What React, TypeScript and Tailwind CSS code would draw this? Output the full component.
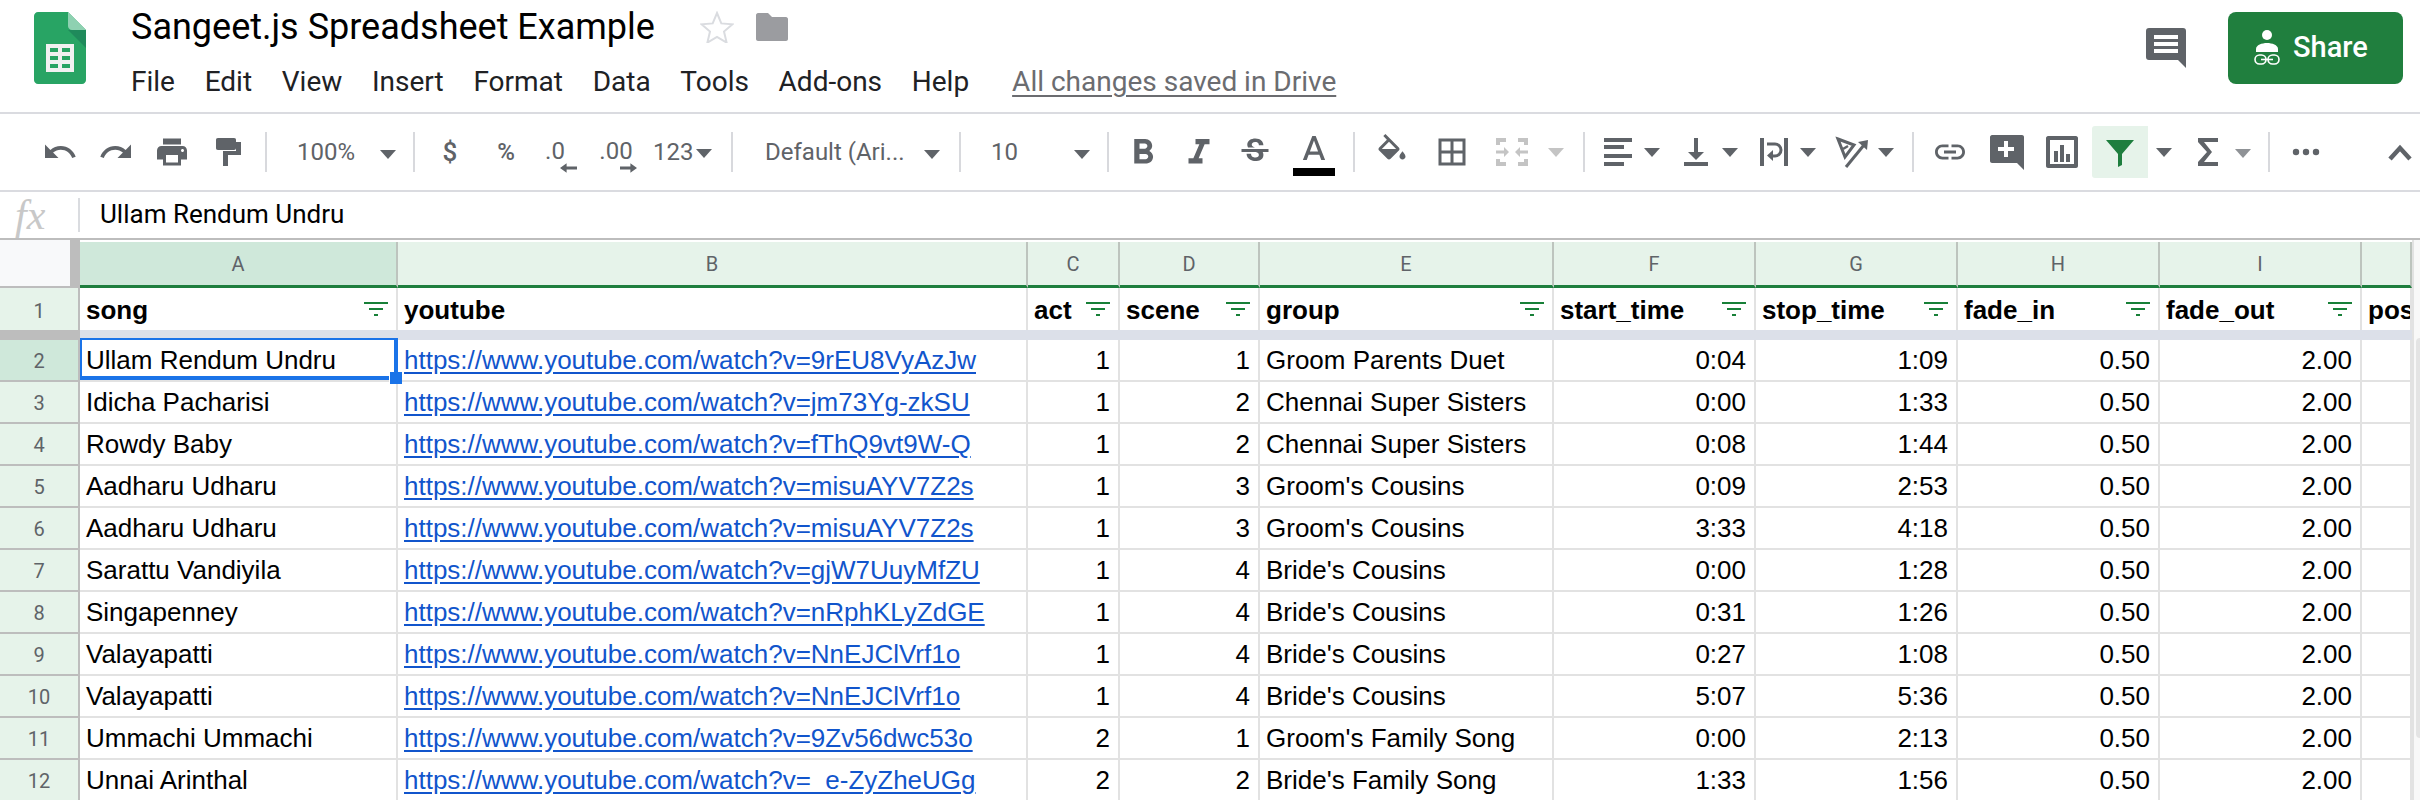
import React from "react";

const GREY = "#5f6368";
const COLS =
  "grid grid-cols-[80px_318px_630px_92px_140px_294px_202px_202px_202px_202px_50px]";

function Sep({ className = "" }: { className?: string }) {
  return <div className={"h-[40px] w-[2px] shrink-0 bg-[#d8d9dd] " + className} />;
}

function Caret({ className = "", color = GREY }: { className?: string; color?: string }) {
  return (
    <svg viewBox="0 0 16 9" className={"h-[9px] w-[16px] shrink-0 " + className}>
      <path d="M0 0h16L8 9z" fill={color} />
    </svg>
  );
}

function Ico({ d, children, vb = 24, color = GREY, className = "" }: { d?: string; children?: React.ReactNode; vb?: number; color?: string; className?: string }) {
  return (
    <svg viewBox={`0 0 ${vb} ${vb}`} fill={color} className={"h-[36px] w-[36px] shrink-0 " + className}>
      {d ? <path d={d} /> : null}
      {children}
    </svg>
  );
}

function Btn({ children, className = "" }: { children: React.ReactNode; className?: string }) {
  return <div className={"flex h-full w-[56px] shrink-0 items-center justify-center " + className}>{children}</div>;
}

function Drop({ label, className }: { label: string; className: string }) {
  return (
    <div className={"flex shrink-0 items-center text-[24px] text-[#5f6368] " + className}>
      <span className="whitespace-nowrap">{label}</span>
      <Caret className="ml-auto mt-[4px]" />
    </div>
  );
}

function IcoCaret({ children }: { children: React.ReactNode }) {
  return (
    <div className="flex w-[78px] shrink-0 items-center">
      {children}
      <Caret className="ml-[8px]" />
    </div>
  );
}

function Toolbar() {
  return (
    <div className="flex h-[80px] items-center border-y-2 border-[#dadbe0] pl-[32px] pr-[2px] font-['Roboto',sans-serif]">
      <Btn><Ico d="M12.5 8c-2.65 0-5.05.99-6.9 2.6L2 7v9h9l-3.62-3.62c1.39-1.16 3.16-1.88 5.12-1.88 3.54 0 6.55 2.31 7.6 5.5l2.37-.78C21.08 11.03 17.15 8 12.5 8z" /></Btn>
      <Btn><Ico d="M18.4 10.6C16.55 8.99 14.15 8 11.5 8c-4.65 0-8.58 3.03-9.96 7.22L3.9 16c1.05-3.19 4.05-5.5 7.6-5.5 1.95 0 3.73.72 5.12 1.88L13 16h9V7l-3.6 3.6z" /></Btn>
      <Btn><Ico d="M19 8H5c-1.66 0-3 1.34-3 3v6h4v4h12v-4h4v-6c0-1.66-1.34-3-3-3zm-3 11H8v-5h8v5zm3-7c-.55 0-1-.45-1-1s.45-1 1-1 1 .45 1 1-.45 1-1 1zm-1-9H6v4h12V3z" /></Btn>
      <Btn>
        <Ico vb={36}>
          <path d="M8 4h16c1.500 0 2 .7 2 2v8c0 1.300-.5 2-2 2H8c-1.500 0-2-.7-2-2V6c0-1.300.5-2 2-2z" />
          <path d="M26 8h5v13H18v11h-5V17h13z" />
        </Ico>
      </Btn>
      <Sep className="ml-[9px]" />
      <Drop label="100%" className="w-[146px] pl-[30px] pr-[17px]" />
      <Sep />
      <Btn className="ml-[7px] text-[26px] font-medium text-[#5f6368]">$</Btn>
      <Btn className="text-[24px] font-medium text-[#5f6368]">%</Btn>
      <div className="relative flex w-[56px] shrink-0 flex-col items-center">
        <span className="-mt-[2px] mr-[14px] text-[24px] leading-[28px] text-[#5f6368]">.0</span>
        <svg viewBox="0 0 18 10" className="absolute left-[26px] top-[24px] h-[10px] w-[17px]">
          <path d="M0 5l7-5v3.500h11v3H7V10z" fill={GREY} />
        </svg>
      </div>
      <div className="relative flex w-[56px] shrink-0 flex-col items-center">
        <span className="-mt-[2px] mr-[4px] text-[24px] leading-[28px] text-[#5f6368]">.00</span>
        <svg viewBox="0 0 18 10" className="absolute left-[30px] top-[24px] h-[10px] w-[17px]">
          <path d="M18 5l-7-5v3.500H0v3h11V10z" fill={GREY} />
        </svg>
      </div>
      <div className="flex w-[85px] shrink-0 items-center pl-[7px] text-[24px] text-[#5f6368]">
        <span>123</span>
        <Caret className="ml-[3px] mt-[2px]" />
      </div>
      <Sep />
      <Drop label="Default (Ari..." className="w-[226px] pl-[32px] pr-[19px]" />
      <Sep />
      <Drop label="10" className="w-[146px] pl-[30px] pr-[17px]" />
      <Sep />
      <Btn className="ml-[6px]">
        <svg viewBox="0 0 24 24" fill={GREY} className="mt-[2px] h-[42px] w-[42px]">
          <path d="M15.6 10.79c.97-.67 1.65-1.770 1.650-2.790 0-2.260-1.750-4-4-4H7v14h7.040c2.090 0 3.710-1.700 3.710-3.790 0-1.520-.860-2.820-2.150-3.420zM10 6.500h3c.830 0 1.500.670 1.500 1.500s-.670 1.500-1.500 1.500h-3v-3zm3.500 9H10v-3h3.500c.830 0 1.500.670 1.500 1.500s-.670 1.500-1.500 1.500z" />
        </svg>
      </Btn>
      <Btn>
        <svg viewBox="0 0 24 24" fill={GREY} className="mt-[2px] h-[42px] w-[42px]">
          <path d="M10 4v3h2.210l-3.420 8H6v3h8v-3h-2.210l3.420-8H18V4z" />
        </svg>
      </Btn>
      <Btn><Ico d="M6.850 7.080C6.850 4.370 9.450 3 12.240 3c1.640 0 3 .490 3.900 1.280.770.650 1.460 1.730 1.460 3.240h-3.010c0-.310-.050-.590-.150-.850-.290-.860-1.200-1.280-2.250-1.280-1.860 0-2.340 1.020-2.340 1.700 0 .480.250.880.740 1.210.380.250.770.480 1.410.700H7.390c-.210-.340-.540-.890-.540-1.920zM21 12v-2H3v2h9.620c1.150.450 1.960.750 1.960 1.970 0 1-.810 1.670-2.280 1.670-1.540 0-2.930-.540-2.930-2.510H6.400c0 .550.080 1.130.240 1.580.810 2.290 3.290 3.300 5.670 3.300 2.270 0 5.300-.890 5.300-4.050 0-.300-.010-1.160-.480-1.940H21V12z" /></Btn>
      <div className="mt-[8px] flex w-[56px] shrink-0 flex-col items-center pl-[6px]">
        <svg viewBox="5 3 14 14" className="h-[24px] w-[24px]" fill={GREY}>
          <path d="M11 3L5.500 17h2.250l1.120-3h6.250l1.120 3h2.250L13 3h-2zm-1.380 9L12 5.670 14.380 12H9.620z" />
        </svg>
        <div className="mt-[8px] h-[8px] w-[42px] bg-black" />
      </div>
      <Sep className="ml-[14px]" />
      <Btn className="ml-[9px]"><Ico d="M16.560 8.940L7.620 0 6.210 1.410l2.380 2.380-5.150 5.150c-.590.590-.590 1.540 0 2.120l5.500 5.500c.290.290.680.440 1.060.440s.770-.150 1.060-.440l5.500-5.500c.590-.580.590-1.530 0-2.120zM5.210 10L10 5.210 14.790 10H5.210zM19 11.500s-2 2.170-2 3.500c0 1.100.900 2 2 2s2-.900 2-2c0-1.330-2-3.500-2-3.500z" /></Btn>
      <Btn className="ml-[4px]"><Ico d="M3 3v18h18V3H3zm8 16H5v-6h6v6zm0-8H5V5h6v6zm8 8h-6v-6h6v6zm0-8h-6V5h6v6z" /></Btn>
      <Btn className="ml-[4px]">
        <Ico vb={36} color="#c4c4c4">
          <path d="M2 4h10v4H6v3H2zM24 4h10v7h-4V8h-6zM2 25h4v3h6v4H2zM30 25h4v7H24v-4h6z" />
          <path d="M2 16.500h8V13l5 5-5 5v-3.500H2zM34 16.500h-8V13l-5 5 5 5v-3.500h8z" />
        </Ico>
      </Btn>
      <Caret className="ml-[8px]" color="#c4c4c4" />
      <Sep className="ml-[19px]" />
      <div className="ml-[15px] flex items-center">
        <IcoCaret>
          <Ico vb={36}><path d="M4 4h28v4H4zM4 11h20v4H4zM4 20h28v4H4zM4 28h20v4H4z" /></Ico>
        </IcoCaret>
        <IcoCaret>
          <Ico vb={36}><path d="M6 28h24v4H6zM16 4h4v14h6l-8 8-8-8h6z" /></Ico>
        </IcoCaret>
        <IcoCaret>
          <Ico vb={36}>
            <path d="M4 4h4v28H4zM28 4h4v28h-4z" />
            <path d="M11 10h8a6 6 0 0 1 0 12h-3" fill="none" stroke={GREY} strokeWidth="3" />
            <path d="M17 16v11l-6-5.500z" />
          </Ico>
        </IcoCaret>
        <IcoCaret>
          <Ico vb={36}>
            <path d="M4 5l16 6-9 12z" fill="none" stroke={GREY} strokeWidth="3" />
            <path d="M9 15l5-3" stroke={GREY} strokeWidth="2.500" />
            <path d="M12 33L30 11" stroke={GREY} strokeWidth="3" />
            <path d="M24 8l10-2-1 10z" />
          </Ico>
        </IcoCaret>
      </div>
      <Sep />
      <Btn className="ml-[8px]"><Ico d="M3.900 12c0-1.710 1.390-3.100 3.100-3.100h4V7H7c-2.760 0-5 2.240-5 5s2.240 5 5 5h4v-1.900H7c-1.710 0-3.100-1.390-3.100-3.100zM8 13h8v-2H8v2zm9-6h-4v1.900h4c1.710 0 3.100 1.390 3.100 3.100s-1.390 3.100-3.100 3.100h-4V17h4c2.760 0 5-2.240 5-5s-2.240-5-5-5z" /></Btn>
      <Btn>
        <Ico vb={36}>
          <path fillRule="evenodd" d="M4 1h30c1 0 2 .700 2 2v33l-7-7H4c-1 0-2-1-2-2V3c0-1 1-2 2-2zm12 6v6h-6v4h6v6h4v-6h6v-4h-6V7z" />
        </Ico>
      </Btn>
      <Btn>
        <Ico vb={36}>
          <path fillRule="evenodd" d="M4 2h28c1 0 2 1 2 2v28c0 1-1 2-2 2H4c-1 0-2-1-2-2V4c0-1 1-2 2-2zm2 4v24h24V6zM10 17h4v11h-4zM16 11h4v17h-4zM22 20h4v8h-4z" />
        </Ico>
      </Btn>
      <div className="ml-[2px] flex h-[52px] w-[56px] shrink-0 items-center justify-center rounded-l-[3px] bg-[#e6f3ea]">
        <Ico vb={36} color="#1e7e3e"><path d="M4 6h28L20 20v11l-4 2V20z" /></Ico>
      </div>
      <Caret className="ml-[8px]" />
      <Ico vb={36} className="ml-[18px]"><path d="M8 4h20v4H14l8 10-8 10h14v4H8v-4l9-10L8 8z" /></Ico>
      <Caret className="ml-[9px] mt-[3px] h-[8px]" color="#8f9296" />
      <Sep className="ml-[17px]" />
      <Ico vb={36} className="ml-[18px]">
        <circle cx="8" cy="18" r="3.200" />
        <circle cx="18" cy="18" r="3.200" />
        <circle cx="28" cy="18" r="3.200" />
      </Ico>
      <Ico vb={36} className="ml-auto">
        <path d="M8 25l10-11 10 11" fill="none" stroke={GREY} strokeWidth="4.500" />
      </Ico>
    </div>
  );
}

function SheetsLogo() {
  return (
    <svg viewBox="0 0 52 72" className="h-[72px] w-[52px] shrink-0">
      <path d="M4 0h30l18 18v50c0 2.200-1.800 4-4 4H4c-2.200 0-4-1.800-4-4V4c0-2.200 1.800-4 4-4z" fill="#28a464" />
      <path d="M34 18l18 18V18z" fill="#1f8a5b" />
      <path d="M34 0l18 18H38c-2.200 0-4-1.800-4-4z" fill="#8ed1b1" />
      <path fillRule="evenodd" d="M12 32h28v28H12zM16 36v4h8v-4zm12 0v4h8v-4zM16 44v4h8v-4zm12 0v4h8v-4zM16 52v4h8v-4zm12 0v4h8v-4z" fill="#f1f1f1" />
    </svg>
  );
}

function TitleBar() {
  const menu = ["File", "Edit", "View", "Insert", "Format", "Data", "Tools", "Add-ons", "Help"];
  return (
    <div className="flex h-[112px] font-['Roboto',sans-serif]">
      <div className="ml-[34px] mt-[12px]"><SheetsLogo /></div>
      <div className="ml-[45px] flex flex-col">
        <div className="mt-[5px] flex h-[44px] items-center">
          <span className="text-[36px] leading-[44px] text-black">Sangeet.js Spreadsheet Example</span>
          <svg viewBox="0 0 34 32" className="ml-[45px] h-[32px] w-[34px]">
            <path d="M17 2l4.300 10.400 11.200.900-8.500 7.300 2.600 11L17 25.800 7.400 31.600 10 20.600 1.500 13.300l11.200-.900z" fill="none" stroke="#dadce0" strokeWidth="2" />
          </svg>
          <svg viewBox="0 0 32 28" className="ml-[22px] h-[28px] w-[32px]">
            <path d="M2 0h10l4 4h14c1 0 2 1 2 2v20c0 1-1 2-2 2H2c-1 0-2-1-2-2V2c0-1 1-2 2-2z" fill="#9b9ca0" />
          </svg>
        </div>
        <div className="mt-[15px] flex items-center text-[28px] leading-[36px]">
          <div className="flex gap-[29.7px] text-[#202124]">
            {menu.map((m) => (
              <span key={m}>{m}</span>
            ))}
          </div>
          <span className="ml-[43px] text-[#6b6c70] underline underline-offset-[4px]">All changes saved in Drive</span>
        </div>
      </div>
      <div className="ml-auto mr-[17px] mt-[12px] flex items-start">
        <svg viewBox="0 0 40 40" className="mr-[42px] mt-[16px] h-[40px] w-[40px]">
          <path fillRule="evenodd" d="M3 0h34c2 0 3 1 3 3v37l-8-8H3c-2 0-3-1-3-3V3c0-2 1-3 3-3zm5 7v4h24V7zm0 7v4h24v-4zm0 7v4h24v-4z" fill={GREY} />
        </svg>
        <div className="flex h-[72px] w-[175px] items-center rounded-[8px] bg-[#207f3e] pl-[26px] text-[29px] font-medium text-white">
          <svg viewBox="0 0 26 36" className="mr-[13px] h-[36px] w-[26px]">
            <circle cx="13" cy="5" r="5" fill="#fff" />
            <path d="M2 22v-3c0-4 6-6 11-6s11 2 11 6v3z" fill="#fff" />
            <rect x="1" y="25" width="11" height="9" rx="4.500" fill="none" stroke="#fff" strokeWidth="1.600" />
            <rect x="14" y="25" width="11" height="9" rx="4.500" fill="none" stroke="#fff" strokeWidth="1.600" />
            <path d="M7 29.500h12" stroke="#fff" strokeWidth="1.600" />
          </svg>
          Share
        </div>
      </div>
    </div>
  );
}

function FormulaBar() {
  return (
    <div className="flex h-[48px] items-center border-b-2 border-[#bdbdbd]">
      <span className="ml-[15px] w-[63px] font-['Liberation_Serif',serif] text-[42px] italic leading-[46px] text-[#c8c8c8]">fx</span>
      <div className="h-[34px] w-[2px] bg-[#dadce0]" />
      <span className="-mt-[2px] ml-[20px] font-['Roboto',sans-serif] text-[26px] text-black">Ullam Rendum Undru</span>
    </div>
  );
}

function FilterIcon() {
  return (
    <svg viewBox="0 0 24 14" className="h-[14px] w-[24px] shrink-0">
      <path d="M0 0h24v2H0zM5 6h14v2H5zM10 12h4v2h-4z" fill="#188038" />
    </svg>
  );
}

const letters = ["A", "B", "C", "D", "E", "F", "G", "H", "I", ""];
const heads = ["song", "youtube", "act", "scene", "group", "start_time", "stop_time", "fade_in", "fade_out", "pos"];

const rows: [string, string, string, string, string, string, string][] = [
  ["Ullam Rendum Undru", "9rEU8VyAzJw", "1", "1", "Groom Parents Duet", "0:04", "1:09"],
  ["Idicha Pacharisi", "jm73Yg-zkSU", "1", "2", "Chennai Super Sisters", "0:00", "1:33"],
  ["Rowdy Baby", "fThQ9vt9W-Q", "1", "2", "Chennai Super Sisters", "0:08", "1:44"],
  ["Aadharu Udharu", "misuAYV7Z2s", "1", "3", "Groom's Cousins", "0:09", "2:53"],
  ["Aadharu Udharu", "misuAYV7Z2s", "1", "3", "Groom's Cousins", "3:33", "4:18"],
  ["Sarattu Vandiyila", "gjW7UuyMfZU", "1", "4", "Bride's Cousins", "0:00", "1:28"],
  ["Singapenney", "nRphKLyZdGE", "1", "4", "Bride's Cousins", "0:31", "1:26"],
  ["Valayapatti", "NnEJClVrf1o", "1", "4", "Bride's Cousins", "0:27", "1:08"],
  ["Valayapatti", "NnEJClVrf1o", "1", "4", "Bride's Cousins", "5:07", "5:36"],
  ["Ummachi Ummachi", "9Zv56dwc53o", "2", "1", "Groom's Family Song", "0:00", "2:13"],
  ["Unnai Arinthal", "_e-ZyZheUGg", "2", "2", "Bride's Family Song", "1:33", "1:56"],
];

const cell = "flex h-[42px] items-center overflow-hidden whitespace-nowrap border-b-2 border-r-2 border-[#e2e2e2] pt-[1px] text-[26px]";
const num = cell + " justify-end pr-[8px]";
const txt = cell + " pl-[6px]";

function Sheet() {
  return (
    <div className="flex font-['Liberation_Sans',sans-serif]">
      <div className="w-[2412px] shrink-0">
        <div className={COLS + " h-[48px]"}>
          <div className="flex">
            <div className="w-[70px] border-b-2 border-[#bdbdbd] bg-[#f8f9fa]" />
            <div className="w-[10px] bg-[#bdbdbd]" />
          </div>
          {letters.map((l, i) => (
            <div
              key={i}
              className={
                "mt-[2px] flex items-center justify-center border-b-[3px] border-r-2 border-b-[#1e7e3e] border-r-[#bdc4be] font-['Roboto',sans-serif] text-[20px] text-[#5f6368] " +
                (i === 0 ? "bg-[#cfe8da]" : "bg-[#e6f3ea]")
              }
            >
              {l}
            </div>
          ))}
        </div>
        <div className={COLS + " h-[42px]"}>
          <div className="flex items-center justify-center border-r-2 border-[#bdbdbd] bg-[#e6f3ea] pt-[4px] font-['Roboto',sans-serif] text-[20px] text-[#5f6368]">1</div>
          {heads.map((h, i) => (
            <div key={h} className="flex items-center overflow-hidden whitespace-nowrap border-r-2 border-[#e2e2e2] pl-[6px] pr-[8px] pt-[3px] text-[26px] font-bold text-black">
              <span>{h}</span>
              {i < 9 && i !== 1 ? <span className="ml-auto -mt-[3px]"><FilterIcon /></span> : null}
            </div>
          ))}
        </div>
        <div className={COLS + " h-[10px]"}>
          <div className="bg-[#bdbdbd]" />
          <div className="col-span-10 bg-[#dce0e9]" />
        </div>
        {rows.map((r, i) => (
          <div key={i} className={COLS}>
            <div className={"flex h-[42px] items-center justify-center border-b-2 border-r-2 border-[#bdbdbd] pt-[1px] font-['Roboto',sans-serif] text-[20px] text-[#5f6368] " + (i === 0 ? "bg-[#cfe8da]" : "bg-[#e6f3ea]")}>
              {i + 2}
            </div>
            {i === 0 ? (
              <div className="relative">
                <div className={"text-black " + txt}>{r[0]}</div>
                <div className="absolute left-0 -top-[2px] h-[42px] w-[318px] border-b-4 border-l-2 border-r-4 border-t-2 border-[#1a73e8]" />
                <div className="absolute left-[309px] top-[32px] h-[12px] w-[13px] border-l border-white bg-[#1a73e8]" />
              </div>
            ) : (
              <div className={"text-black " + txt}>{r[0]}</div>
            )}
            <div className={txt + " text-[#1155cc] underline underline-offset-[3px]"}>{"https://www.youtube.com/watch?v=" + r[1]}</div>
            <div className={num + " text-black"}>{r[2]}</div>
            <div className={num + " text-black"}>{r[3]}</div>
            <div className={txt + " text-black"}>{r[4]}</div>
            <div className={num + " text-black"}>{r[5]}</div>
            <div className={num + " text-black"}>{r[6]}</div>
            <div className={num + " text-black"}>0.50</div>
            <div className={num + " text-black"}>2.00</div>
            <div className={cell} />
          </div>
        ))}
      </div>
      <div className="flex w-[8px] shrink-0 flex-col border-l-2 border-[#e2e2e2] bg-[#f8f8f8]">
        <div className="ml-[2px] mt-[98px] h-[400px] rounded-l-[6px] bg-[#e4e4e4]" />
      </div>
    </div>
  );
}

export default function App() {
  return (
    <div className="h-[800px] w-[2420px] overflow-hidden bg-white">
      <TitleBar />
      <Toolbar />
      <FormulaBar />
      <Sheet />
    </div>
  );
}
